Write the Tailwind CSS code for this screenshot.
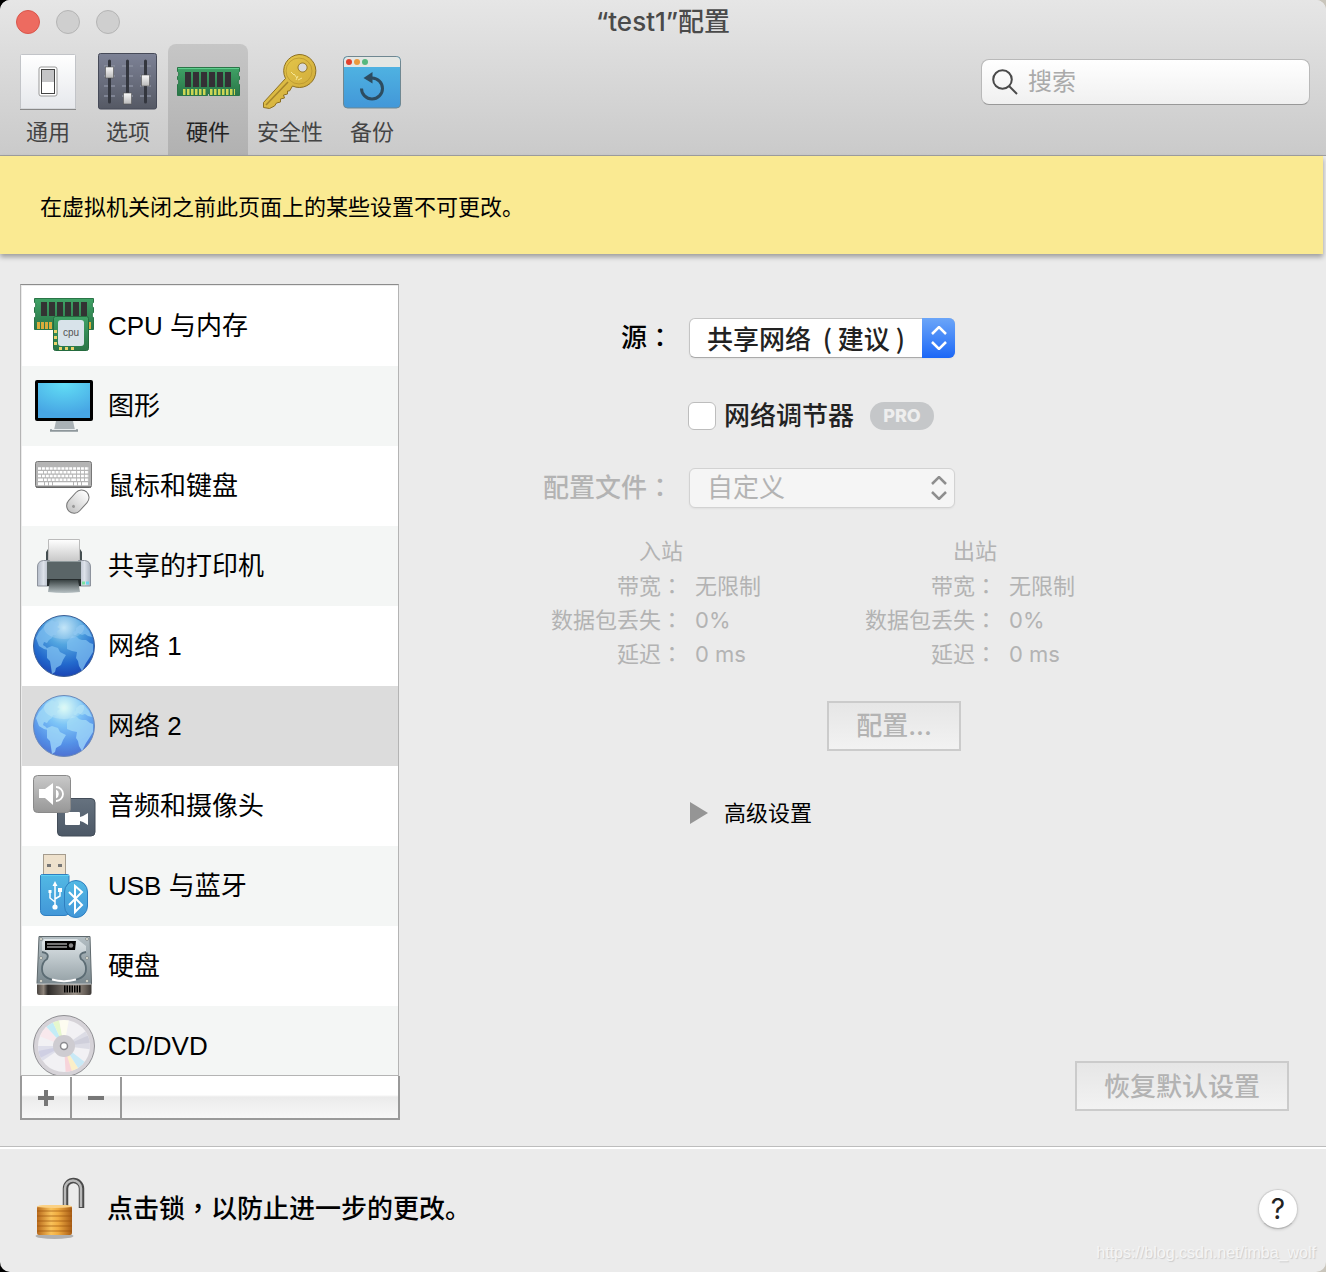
<!DOCTYPE html>
<html lang="zh-CN">
<head>
<meta charset="utf-8">
<meta name="viewport" content="width=device-width, initial-scale=1">
<title>“test1”配置</title>
<script src="https://cdn.jsdelivr.net/npm/@tailwindcss/browser@4"></script>
</head>
<body class="bg-linear-to-r from-black from-50% to-[#c9c5bb] to-50% font-['Inter','Noto_Sans_CJK_SC',sans-serif] text-black">

<svg class="absolute size-0" aria-hidden="true">
  <defs>
    <linearGradient id="green" x2="0" y2="1"><stop stop-color="#3fa266"/><stop offset="1" stop-color="#2a7547"/></linearGradient>
    <linearGradient id="knob" x2="0" y2="1"><stop stop-color="#fafafa"/><stop offset="1" stop-color="#b9b9b9"/></linearGradient>
    <linearGradient id="slate" x2="0" y2="1"><stop stop-color="#7d8296"/><stop offset="1" stop-color="#555964"/></linearGradient>
    <linearGradient id="plate" x2="0" y2="1"><stop stop-color="#fff"/><stop offset="1" stop-color="#e6e8ec"/></linearGradient>
    <linearGradient id="gold" x2="1" y2="1"><stop stop-color="#ecd04f"/><stop offset="1" stop-color="#c9a235"/></linearGradient>
    <linearGradient id="sky" x2="0" y2="1"><stop stop-color="#52b9e4"/><stop offset="1" stop-color="#4297d8"/></linearGradient>
    <linearGradient id="silver" x2="0" y2="1"><stop stop-color="#fff"/><stop offset="1" stop-color="#c4c4c4"/></linearGradient>
    <linearGradient id="steel" x2="0" y2="1"><stop stop-color="#b4bfc4"/><stop offset="1" stop-color="#7b898f"/></linearGradient>
    <linearGradient id="platter" x2="0" y2="1"><stop stop-color="#dfe6e9"/><stop offset="1" stop-color="#98a4a9"/></linearGradient>
    <linearGradient id="side" x2="1" y2="0"><stop stop-color="#b4bcc9"/><stop offset=".5" stop-color="#dde2ea"/><stop offset="1" stop-color="#aab2be"/></linearGradient>
    <linearGradient id="tray" x2="0" y2="1"><stop stop-color="#3a4344"/><stop offset="1" stop-color="#b8c2c5"/></linearGradient>
    <linearGradient id="grey" x2="0" y2="1"><stop stop-color="#c9c9c9"/><stop offset="1" stop-color="#979797"/></linearGradient>
    <linearGradient id="cam" x2="0" y2="1"><stop stop-color="#66727f"/><stop offset="1" stop-color="#4c5866"/></linearGradient>
    <linearGradient id="base" x2="1" y2="0"><stop stop-color="#494440"/><stop offset=".12" stop-color="#8f857b"/><stop offset=".2" stop-color="#2e2b29"/><stop offset=".7" stop-color="#9a9188"/><stop offset=".88" stop-color="#6a625a"/><stop offset="1" stop-color="#3b3734"/></linearGradient>
    <linearGradient id="brass" x2="1" y2="0"><stop stop-color="#b8691b"/><stop offset=".4" stop-color="#f9c25a"/><stop offset=".6" stop-color="#f0ac41"/><stop offset="1" stop-color="#a95d16"/></linearGradient>
    <radialGradient id="screen" cx=".5" cy="0" r=".9"><stop stop-color="#62dff6"/><stop offset="1" stop-color="#47a6e4"/></radialGradient>
    <radialGradient id="sea" cx=".5" cy=".2" r=".8"><stop stop-color="#b9e1f7"/><stop offset=".35" stop-color="#52a5e0"/><stop offset=".75" stop-color="#2268cc"/><stop offset="1" stop-color="#1a45b5"/></radialGradient>
    <clipPath id="disc"><circle cx="32" cy="32" r="26"/></clipPath>
    <symbol id="globe" viewBox="0 0 64 64">
      <circle cx="32" cy="32" r="30.5" fill="url(#sea)" stroke="#3d5f95"/>
      <g fill="#7fbff0" fill-opacity=".75">
        <path d="M4 24l3-6 3-3 4-5 6-4 3 2 3-1 1 4-2 2 3 2-3 2-1 4-3 0-1 3-3 2-2 3-3-1-1 3 3 2 2 3-4-1-5-3z"/>
        <path d="M15 34l5-2 6 2 2 4 6 3-3 5-2 5-5 3-1 4-3 2-1-7-1-6-3-3z"/>
        <path d="M35 28l5-6 5 1 2 2 3 1 4 0 4 3 3 1 0 8-5 8-2 3-4 8-3-5-1-5-2-3 1-6-5-1-5-2z"/>
        <path d="M41 18l3-1 0-3 4-3 4 0 5 6 3 6-4-1-3-2-3 1-4-2-2 2-2 0z"/>
      </g>
      <ellipse cx="32" cy="14" rx="20" ry="11" fill="#fff" fill-opacity=".15"/>
    </symbol>
  </defs>
</svg>

<div class="relative flex min-h-screen flex-col overflow-hidden rounded-[10px] bg-[#ebebeb]">

  <header class="border-b border-[#a0a0a0] bg-linear-to-b from-[#e6e6e6] to-[#cacaca]">
    <div class="relative flex h-11 items-center px-4">
      <div class="flex gap-4">
        <button aria-label="关闭" class="size-6 rounded-full border border-[#d9564b] bg-[#ed6b60]"></button>
        <button aria-label="最小化" class="size-6 rounded-full border border-[#b4b4b4] bg-[#cfcfcf]"></button>
        <button aria-label="缩放" class="size-6 rounded-full border border-[#b4b4b4] bg-[#cfcfcf]"></button>
      </div>
      <h1 class="pointer-events-none absolute inset-x-0 text-center text-[26px] leading-[44px] font-medium text-[#4a4a4a]">“test1”配置</h1>
    </div>
    <div class="flex justify-between pr-4 pl-2">
      <nav class="flex h-[111px] text-[22px] leading-9 text-[#444]">
        <button class="flex w-20 flex-col items-center pt-1.5">
          <svg class="size-16" viewBox="0 0 64 64"><rect x="4.500" y="4.500" width="55" height="54.500" rx="1" fill="url(#plate)" stroke="#c2c4c8"/><path d="M4 59.500h56" stroke="#888"/><rect x="23" y="17" width="18" height="29" rx="2" fill="#fff" stroke="#999"/><rect x="25.500" y="19.500" width="13" height="24" fill="#fff" stroke="#444"/><rect x="26" y="20" width="12" height="12" fill="#c4c4c6"/></svg>
          <span>通用</span>
        </button>
        <button class="flex w-20 flex-col items-center pt-1.5">
          <svg class="size-16" viewBox="0 0 64 64"><rect x="2.500" y="3.500" width="58" height="55.500" rx="2" fill="url(#slate)" stroke="#464a58"/><path d="M8 16h48M8 26h48M8 36h48M8 46h48" stroke="#8b90a0" stroke-width="1.500" stroke-dasharray="11 7"/><path d="M13.500 11v41M31.500 11v41M49.500 11v41" stroke="#33363e" stroke-width="3" stroke-linecap="round"/><g fill="url(#knob)" stroke="#555" stroke-width=".6"><rect x="9.500" y="17" width="8" height="11"/><rect x="27.500" y="43" width="8" height="11"/><rect x="45.500" y="25" width="8" height="11"/></g></svg>
          <span>选项</span>
        </button>
        <button aria-current="page" class="flex w-20 flex-col items-center rounded-t-lg bg-linear-to-b from-[#c6c6c6] to-[#b1b1b1] pt-1.5 text-[#222]">
          <svg class="size-16" viewBox="0 0 64 64"><path d="M1.500 17.500h62v4a3 3 0 0 0 0 5v3a3 3 0 0 0 0 5v11h-30v-2h-2v2h-30v-11a3 3 0 0 0 0-5v-3a3 3 0 0 0 0-5z" fill="url(#green)" stroke="#2a7547"/><path d="M2 18.500h61" stroke="#5fce8e"/><path d="M9 29.500h46" stroke="#343035" stroke-width="15" stroke-dasharray="6 2"/><path d="M7 42h24M34 42h25" stroke="#cdd654" stroke-width="6" stroke-dasharray="2.500 1.500"/></svg>
          <span>硬件</span>
        </button>
        <button class="flex w-[84px] flex-col items-center pt-1.5">
          <svg class="size-16" viewBox="0 0 64 64"><path fill-rule="evenodd" d="M41 4.500a16.500 16.500 0 1 1-6.500 31.500l-3 5-2 0 0 3-4 1 1 3-4 1 0 3-4 1-2 3-5 2.500-6-1 0-5 22-24a16.500 16.500 0 0 1 13.500-24zM44.500 13a4.500 4.500 0 1 0 .1 0z" fill="url(#gold)" stroke="#8d7022"/><circle cx="41" cy="21" r="13" fill="none" stroke="#b9962f" stroke-width=".8"/><path d="M8 55l22-23" stroke="#a5842a" stroke-width="1.500"/><path d="M33 22l3 3M36 24l3 4M40 26l-2 4M44 28l-4 2" stroke="#f6e694"/></svg>
          <span>安全性</span>
        </button>
        <button class="flex w-20 flex-col items-center pt-1.5">
          <svg class="size-16" viewBox="0 0 64 64"><rect x="3.500" y="6.500" width="57" height="51.500" rx="4" fill="url(#sky)" stroke="#6f8791"/><path d="M4 17v-6.500a4 4 0 0 1 4-3.500h48a4 4 0 0 1 4 4v6z" fill="#e4e7e4"/><circle cx="9" cy="12" r="3" fill="#e2402c"/><circle cx="17" cy="12" r="3" fill="#eb9a3d"/><circle cx="25" cy="12" r="3" fill="#56b87e"/><path d="M21.500 38.500a10.500 10.500 0 1 0 10.500-10.500" fill="none" stroke="#2d4c60" stroke-width="3"/><path d="M23.500 28l9-6v11.500z" fill="#2d4c60"/></svg>
          <span>备份</span>
        </button>
      </nav>
      <label class="mt-[15px] flex h-[46px] w-[329px] items-center gap-2.5 rounded-lg border border-[#b9b9b9] border-b-[#999] bg-linear-to-b from-white to-[#f0f0f0] pl-2.5">
        <svg class="size-[26px] shrink-0" viewBox="0 0 26 26" fill="none" stroke="#4a4a4a" stroke-width="2"><circle cx="10.500" cy="10.500" r="9.300"/><path d="M17 17l8 8"/></svg>
        <input type="search" aria-label="搜索" placeholder="搜索" class="w-full min-w-0 bg-transparent text-2xl outline-none placeholder:text-[#aaa]">
      </label>
    </div>
  </header>

  <div class="mr-[3px] bg-[#faea92] px-10 shadow-[0_3px_5px_#00000055]">
    <p class="pt-[34px] pb-[30px] text-[22px] leading-[34px]">在虚拟机关闭之前此页面上的某些设置不可更改。</p>
  </div>

  <main class="flex flex-1 border-b border-[#bcbcbc] pt-[30px] pr-[37px] pb-[26px] pl-5">
    <aside class="flex w-[380px] shrink-0 flex-col">
      <div class="mr-px flex-1 basis-0 overflow-hidden border border-[#b4b4b4] border-t-[#8c8c8c] pt-px pl-px">
        <ul class="font-['Liberation_Sans','Noto_Sans_CJK_SC',sans-serif] text-[26px] leading-10">
          <li><button class="flex h-20 w-full items-center gap-3 bg-white pl-2.5">
            <svg class="size-16" viewBox="0 0 64 64"><path d="M2.500 4.500h59v4a3 3 0 0 0 0 5v5a3 3 0 0 0 0 5v12h-59v-12a3 3 0 0 0 0-5v-5a3 3 0 0 0 0-5z" fill="url(#green)" stroke="#2a7547"/><path d="M9 15h46" stroke="#333" stroke-width="14" stroke-dasharray="6 2"/><path d="M5 31.500h54" stroke="#d9ac3c" stroke-width="7" stroke-dasharray="3 1"/><rect x="21.500" y="22.500" width="35" height="34" rx="2" fill="url(#green)" stroke="#246b3e"/><rect x="26" y="26" width="26" height="26" rx="3" fill="#d8e3ea"/><path d="M27 54.500h15" stroke="#ecd36b" stroke-width="3" stroke-dasharray="3 3"/><path d="M23.500 36v16" stroke="#ecd36b" stroke-width="3" stroke-dasharray="3 3"/><text x="39" y="42" text-anchor="middle" font-size="10" fill="#555">cpu</text></svg>
            CPU 与内存</button></li>
          <li><button class="flex h-20 w-full items-center gap-3 bg-[#f4f6f5] pl-2.5">
            <svg class="size-16" viewBox="0 0 64 64"><path d="M24 47h17l2 9h-21z" fill="#a9b1b5"/><path d="M18 56.500h28" stroke="#8e979b" stroke-width="2.500"/><path d="M20 55.500h24" stroke="#e8ecee"/><rect x="3" y="6" width="58" height="41" rx="2"/><rect x="6" y="9" width="52" height="35" fill="url(#screen)"/></svg>
            图形</button></li>
          <li><button class="flex h-20 w-full items-center gap-3 bg-white pl-2.5">
            <svg class="size-16" viewBox="0 0 64 64"><rect x="3.500" y="7.500" width="56" height="26" rx="2" fill="#b4b4b4" stroke="#777"/><path d="M4 33h55" stroke="#555"/><path d="M6 14.500h51M6 22h51" stroke="#fff" stroke-width="2.600" stroke-dasharray="3 .9"/><path d="M6 18.200h51M6 25.700h51" stroke="#fff" stroke-width="2.600" stroke-dasharray="5 .9 3 .9 3 .9 3 .9 3 .9 3 .9 3 .9 3 .9"/><path d="M6 29.700h51" stroke="#fff" stroke-width="3" stroke-dasharray="6 1 3 1 3 1 20 1 3 1 3 1"/><g transform="rotate(42 45.500 48)"><rect x="38" y="34.500" width="15" height="26" rx="7.500" fill="url(#silver)" stroke="#777"/><circle cx="45.500" cy="54" r="1.500" fill="#999"/></g></svg>
            鼠标和键盘</button></li>
          <li><button class="flex h-20 w-full items-center gap-3 bg-[#f4f6f5] pl-2.5">
            <svg class="size-16" viewBox="0 0 64 64"><path d="M14 29v-11l2-3h32l2 3v11z" fill="#454f51"/><path d="M16.500 5.500h31v23h-31z" fill="url(#silver)" stroke="#bbb"/><path d="M5.500 33q0-6 6-6.500h6v25.500h-12z" fill="url(#side)" stroke="#8d939d"/><path d="M58.500 33q0-6-6-6.500h-6v25.500h12z" fill="url(#side)" stroke="#8d939d"/><path d="M15 27h34v18h-34z" fill="#5a6567"/><path d="M15 27.500h34" stroke="#8f9a9c"/><path d="M15 45h34v7h-34z" fill="#262c2d"/><path d="M18 46h28l2 12q-16 2-32 0z" fill="url(#tray)"/><path d="M50 49h3" stroke="#7be3a0" stroke-width="3"/><path d="M54 49h3" stroke="#6bd3f0" stroke-width="3"/></svg>
            共享的打印机</button></li>
          <li><button class="flex h-20 w-full items-center gap-3 bg-white pl-2.5">
            <svg class="size-16"><use href="#globe"/></svg>
            网络 1</button></li>
          <li><button aria-current="true" class="flex h-20 w-full items-center gap-3 bg-[#dcdcdc] pl-2.5">
            <svg class="size-16 opacity-75 brightness-115"><use href="#globe"/></svg>
            网络 2</button></li>
          <li><button class="flex h-20 w-full items-center gap-3 bg-white pl-2.5">
            <svg class="size-16" viewBox="0 0 64 64"><rect x="25.500" y="24.500" width="37.500" height="37.500" rx="4" fill="url(#cam)" stroke="#434d59"/><rect x="33" y="38" width="15" height="13" rx="1" fill="#fff"/><path d="M48 43l3-1 5-3v12l-5-3-3-1z" fill="#fff"/><rect x="1.500" y="1.500" width="37" height="37" rx="4" fill="url(#grey)" stroke="#8a8a8a"/><path d="M7 15h6l8-6v22l-8-7h-6z" fill="#fff"/><path d="M24 15.500a5 5 0 0 1 0 9z" fill="#fff"/><path d="M24 13a7 7 0 0 1 0 14" fill="none" stroke="#fff" stroke-width="1.800"/></svg>
            音频和摄像头</button></li>
          <li><button class="flex h-20 w-full items-center gap-3 bg-[#f4f6f5] pl-2.5">
            <svg class="size-16" viewBox="0 0 64 64"><rect x="11.500" y=".5" width="22" height="23" fill="#eee1cc" stroke="#a59c8e"/><path d="M15 11.500h4M26 11.500h4" stroke="#777" stroke-width="3"/><path d="M8.500 22q0-1.500 2-1.500h25q1.500 0 1.500 1.500v35q0 4.500-5 4.500h-18q-5.500 0-5.500-5z" fill="url(#sky)" stroke="#2f7fc0"/><path d="M9 21.500h28" stroke="#5fd0f2"/><path d="M23 30v22M23 48l-5-4v-6M23 45l5-3v-6" stroke="#fff" stroke-width="1.500" fill="none"/><circle cx="23" cy="53" r="2.600" fill="#fff"/><path d="M23 27l-2.500 5h5zM26 34h4v4h-4zM16.500 36h3v3h-3z" fill="#fff"/><rect x="32.500" y="26.500" width="23" height="37" rx="11.500" fill="url(#sky)" stroke="#2f7fc0"/><path d="M37 38l13 13-7 7v-26l7 6-13 13" fill="none" stroke="#fff" stroke-width="2"/></svg>
            USB 与蓝牙</button></li>
          <li><button class="flex h-20 w-full items-center gap-3 bg-white pl-2.5">
            <svg class="size-16" viewBox="0 0 64 64"><path d="M5 49h54.500v10q0 2-2 2h-50.500q-2 0-2-2z" fill="url(#base)"/><path d="M7 2.500h51l1.500 47h-54.500z" fill="url(#steel)" stroke="#5f696d"/><path d="M5 50h54" stroke="#dfe5e8"/><path d="M12 5h33l9 7v6q-8 1-5 7 5 3 5 10 0 12-22 12t-22-12q0-7 5-10 3-6-5-7v-10z" fill="url(#platter)"/><path d="M10 18q8 1 5 7-5 3-5 10 0 12 22 12t22-12q0-7-5-10-3-6 5-7" fill="none" stroke="#5c6c74" stroke-width="1.800"/><path d="M20 45.500q12 3.500 24 0" fill="none" stroke="#fff" stroke-width="2"/><path d="M13 7h31l-1 9h-30z"/><path d="M15 10h20M15 13h20" stroke="#999" stroke-width="1.500"/><circle cx="39" cy="11.500" r="2.200" fill="#888"/><path d="M32 55h17" stroke="#000" stroke-width="7" stroke-dasharray="1.500 1"/><g fill="#e4e4d6" stroke="#6b7478" stroke-width=".6"><circle cx="9" cy="5" r="1.500"/><circle cx="55" cy="5" r="1.500"/><circle cx="9" cy="24" r="1.500"/><circle cx="55" cy="24" r="1.500"/><circle cx="9" cy="47" r="1.500"/><circle cx="55" cy="47" r="1.500"/></g></svg>
            硬盘</button></li>
          <li><button class="flex h-20 w-full items-center gap-3 bg-[#f4f6f5] pl-2.5">
            <svg class="size-16" viewBox="0 0 64 64"><circle cx="32" cy="32" r="30.500" fill="#d6d3d8" stroke="#8f8f93"/><g clip-path="url(#disc)"><path d="M0 0h64v64h-64z" fill="#f2f1f4"/><path d="M32 32L64 10V36z" fill="#dcdce5"/><path d="M32 32L64 18V28z" fill="#cfcfdb"/><path d="M32 32L0 32V54z" fill="#dedeea"/><path d="M32 32L0 38V48z" fill="#cfcfe3"/><path d="M32 32L2 20l8-12z" fill="#f8e8ec"/><path d="M32 32L10 8l8-6z" fill="#c4ecf6"/><path d="M32 32L18 2l8-2z" fill="#e6f8cd"/><path d="M32 32L26 0h12z" fill="#fdfcf0"/><path d="M32 32L34 64h10z" fill="#f7d4da"/><path d="M32 32L42 64l8-4z" fill="#fbefc8"/><path d="M32 32L50 60l8-8z" fill="#c9e9f6"/></g><circle cx="32" cy="32" r="11" fill="#ceccd1"/><circle cx="32" cy="32" r="3.500" fill="#fff" stroke="#8b8b8f" stroke-width="1.500"/></svg>
            CD/DVD</button></li>
        </ul>
      </div>
      <div class="flex h-11 border-2 border-t-0 border-[#999] bg-linear-to-b from-white from-45% via-[#ebebeb] via-50% to-[#f7f7f7] pt-px">
        <button aria-label="添加" class="grid w-[50px] place-items-center border-r-2 border-[#999]"><svg class="size-4" viewBox="0 0 16 16"><path d="M0 8h16M8 0v16" stroke="#777" stroke-width="4"/></svg></button>
        <button aria-label="移除" class="grid w-[50px] place-items-center border-r-2 border-[#999]"><svg class="size-4" viewBox="0 0 16 16"><path d="M0 8h16" stroke="#777" stroke-width="4"/></svg></button>
      </div>
    </aside>

    <section class="flex flex-1 flex-col justify-between pt-[34px] pb-[9px]">
      <form class="grid grid-cols-[273px_1fr] gap-x-4 text-[26px] leading-10 font-medium">
        <label for="source" class="text-right">源<span lang="zh-TW" class="font-['Noto_Sans_CJK_TC'] leading-4">：</span></label>
        <div class="relative h-10 w-[266px]">
          <select id="source" class="h-10 w-full appearance-none rounded-md border border-[#c4c4c4] border-b-[#aaa] bg-white pl-[17px] font-['Noto_Sans_CJK_SC',sans-serif] leading-9 text-[#222] shadow-xs"><option>共享网络&nbsp;&nbsp;(&nbsp;建议&nbsp;)</option></select>
          <span class="pointer-events-none absolute inset-y-0 right-0 grid w-[33px] place-items-center rounded-r-md bg-linear-to-b from-[#6ba5f8] to-[#1a66f6]"><svg class="h-6 w-4" viewBox="0 0 16 24" fill="none" stroke="#fff" stroke-width="2.500"><path d="M1 8l7-7 7 7M1 16l7 7 7-7"/></svg></span>
        </div>

        <div class="col-start-2 mt-[38px] flex h-10 items-center">
          <input id="conditioner" type="checkbox" class="-ml-px size-7 appearance-none rounded-md border border-[#bdbdbd] bg-white">
          <label for="conditioner" class="ml-2 text-[#222]">网络调节器</label>
          <span class="ml-4 h-7 w-16 rounded-full bg-[#c5c7c9] text-center text-lg leading-7 font-extrabold text-[#eee]">PRO</span>
        </div>

        <label for="profile" class="mt-8 text-right text-[#b3b3b3]">配置文件<span lang="zh-TW" class="font-['Noto_Sans_CJK_TC'] leading-4">：</span></label>
        <div class="relative mt-8 h-10 w-[266px]">
          <select id="profile" disabled class="h-10 w-full appearance-none rounded-md border border-[#d2d2d2] bg-[#f5f5f5] pl-[17px] leading-9 font-normal text-[#b3b3b3] opacity-100 shadow-xs"><option>自定义</option></select>
          <span class="pointer-events-none absolute inset-y-0 right-0 grid w-[33px] place-items-center"><svg class="h-6 w-4" viewBox="0 0 16 24" fill="none" stroke="#8e8e8e" stroke-width="2.500"><path d="M1 8l7-7 7 7M1 16l7 7 7-7"/></svg></span>
        </div>

        <div class="col-span-2 mt-6 ml-[150px] flex text-[22px] leading-[34px] font-normal text-[#b3b3b3]">
          <table class="w-[314px] table-fixed">
            <thead><tr><th class="h-[37px] w-[133px] text-right align-middle font-normal">入站</th><td></td></tr></thead>
            <tbody>
              <tr><th class="text-right font-normal">带宽<span lang="zh-TW" class="font-['Noto_Sans_CJK_TC'] leading-4">：</span></th><td class="pl-3">无限制</td></tr>
              <tr><th class="text-right font-normal whitespace-nowrap">数据包丢失<span lang="zh-TW" class="font-['Noto_Sans_CJK_TC'] leading-4">：</span></th><td class="pl-3">0%</td></tr>
              <tr><th class="text-right font-normal">延迟<span lang="zh-TW" class="font-['Noto_Sans_CJK_TC'] leading-4">：</span></th><td class="pl-3">0 ms</td></tr>
            </tbody>
          </table>
          <table class="w-[314px] table-fixed">
            <thead><tr><th class="h-[37px] w-[133px] text-right align-middle font-normal">出站</th><td></td></tr></thead>
            <tbody>
              <tr><th class="text-right font-normal">带宽<span lang="zh-TW" class="font-['Noto_Sans_CJK_TC'] leading-4">：</span></th><td class="pl-3">无限制</td></tr>
              <tr><th class="text-right font-normal whitespace-nowrap">数据包丢失<span lang="zh-TW" class="font-['Noto_Sans_CJK_TC'] leading-4">：</span></th><td class="pl-3">0%</td></tr>
              <tr><th class="text-right font-normal">延迟<span lang="zh-TW" class="font-['Noto_Sans_CJK_TC'] leading-4">：</span></th><td class="pl-3">0 ms</td></tr>
            </tbody>
          </table>
        </div>

        <button type="button" disabled class="col-start-2 mt-[30px] ml-[138px] h-[50px] w-[134px] border-2 border-[#cbcbcb] bg-linear-to-b from-[#e6e6e6] to-[#f2f2f2] text-[#b3b3b3]">配置...</button>

        <button type="button" aria-expanded="false" class="col-start-2 mt-[42px] ml-px flex items-center gap-4 text-[22px] font-normal">
          <svg class="h-[22px] w-[18px]" viewBox="0 0 18 22"><path d="M0 0l18 11-18 11z" fill="#959595"/></svg>高级设置
        </button>
      </form>
      <button disabled class="h-[50px] w-[214px] self-end border-2 border-[#cbcbcb] bg-linear-to-b from-[#e6e6e6] to-[#f2f2f2] text-[26px] font-medium text-[#b3b3b3]">恢复默认设置</button>
    </section>
  </main>

  <footer class="flex h-[125px] items-center border-t-2 border-white pr-7 pb-1 pl-8">
    <button aria-label="锁" class="mr-[11px]"><svg class="block size-16" viewBox="0 2 64 64"><ellipse cx="22.500" cy="61" rx="19" ry="3" fill="#000" fill-opacity=".25"/><path d="M33.500 32V13.500a8 8 0 0 1 16 0V33" fill="none" stroke="#4b4b4b" stroke-width="5.500"/><path d="M33 32V13.500a8 8 0 0 1 16 0V32" fill="none" stroke="#b9b9b9" stroke-width="2.500"/><rect x="5" y="31" width="35" height="29" rx="2" fill="url(#brass)"/><path d="M5 36h35M5 41h35M5 46h35M5 51h35M5 56h35" stroke="#96500d" stroke-opacity=".45" stroke-width="1.500"/><path d="M5 32q1-2 6-2h23q5 0 6 2-17 2-35 0z" fill="#fbd184"/></svg></button>
    <p class="flex-1 text-[26px] leading-10 font-medium">点击锁<span lang="zh-TW" class="font-['Noto_Sans_CJK_TC'] leading-4">，</span>以防止进一步的更改。</p>
    <button aria-label="帮助" class="size-10 rounded-full border border-[#cfcfcf] border-b-[#b5b5b5] bg-white text-[28px] leading-9 text-[#222] shadow-sm">?</button>
  </footer>

  <span class="pointer-events-none absolute right-2.5 bottom-[7px] font-['Liberation_Sans',sans-serif] text-base text-[#f5f5f5] [text-shadow:1px_1px_1px_#ccc]">https://blog.csdn.net/imba_wolf</span>
</div>
</body>
</html>
